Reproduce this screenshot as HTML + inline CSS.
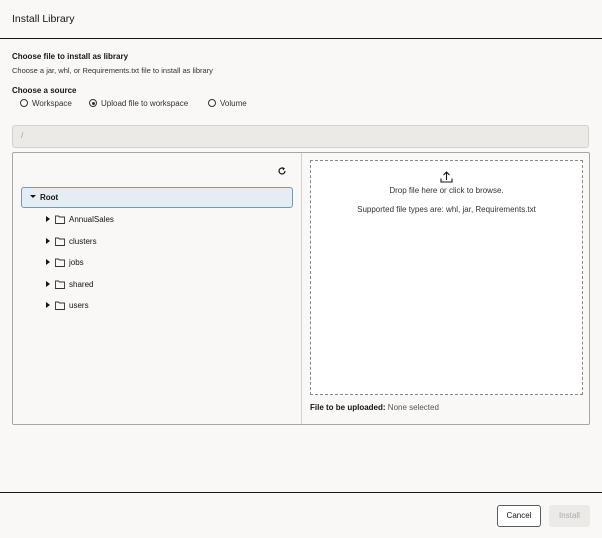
<!DOCTYPE html>
<html><head><style>
*{box-sizing:border-box;margin:0;padding:0}
body{width:602px;height:538px;background:#f9f8f6;font-family:"Liberation Sans",sans-serif;color:#161513;position:relative;overflow:hidden;font-size:8px}
.a{position:absolute;white-space:nowrap}
.radio{display:inline-block;width:8px;height:8px;border:1px solid #333;border-radius:50%;vertical-align:-1px;margin-right:4px;position:relative}
.radio.on::after{content:"";position:absolute;left:1.5px;top:1.5px;width:3px;height:3px;background:#333;border-radius:50%}
.row{position:absolute;left:46px;height:12px;font-size:8px;display:flex;align-items:center}
.tri{width:0;height:0;border-left:4px solid #161513;border-top:3px solid transparent;border-bottom:3px solid transparent;margin-right:5px}
.fold{width:10px;height:9px;margin-right:4px}
</style></head><body>
<div class="a" style="left:12px;top:13px;font-size:10.5px;color:#161513">Install Library</div>
<div class="a" style="left:0;top:38px;width:602px;height:1px;background:#161513"></div>
<div class="a" style="left:12px;top:52px;font-size:8px;font-weight:bold">Choose file to install as library</div>
<div class="a" style="left:12px;top:66px;font-size:7.5px;color:#333">Choose a jar, whl, or Requirements.txt file to install as library</div>
<div class="a" style="left:12px;top:86px;font-size:8px;font-weight:bold">Choose a source</div>
<div class="a" style="left:20px;top:99px;font-size:8px;color:#333"><span class="radio"></span>Workspace</div>
<div class="a" style="left:89px;top:99px;font-size:8px;color:#333"><span class="radio on"></span>Upload file to workspace</div>
<div class="a" style="left:208px;top:99px;font-size:8px;color:#333"><span class="radio"></span>Volume</div>
<div class="a" style="left:12px;top:125px;width:577px;height:23px;background:#eceae7;border:1px solid #d4d1cc;border-radius:3px"></div>
<div class="a" style="left:21px;top:131px;font-size:8px;color:#999">/</div>
<div class="a" style="left:12px;top:152px;width:578px;height:273px;border:1px solid #a9a6a2;border-radius:2px"></div>
<div class="a" style="left:301px;top:153px;width:1px;height:271px;background:#d4d1cc"></div>
<svg class="a" style="left:277px;top:166px" width="10" height="10" viewBox="0 0 10 10"><path d="M8 5A3 3 0 1 1 6.5 2.4" fill="none" stroke="#161513" stroke-width="1.2"/><path d="M5.5 1L8 2.5 6 4.5z" fill="#161513"/></svg>
<div class="a" style="left:21px;top:187px;width:272px;height:21px;background:#e4edf3;border:1px solid #6f9ab8;border-radius:3px"></div>
<div class="a" style="left:30px;top:195px;width:0;height:0;border-top:3px solid #161513;border-left:3px solid transparent;border-right:3px solid transparent"></div>
<div class="a" style="left:40px;top:193px;font-size:8px;font-weight:bold">Root</div>
<div class="row" style="top:213px"><span class="tri"></span><svg class="fold" viewBox="0 0 10 9"><path d="M.5 1h3l1 1h5v6.5H.5z" fill="none" stroke="#333" stroke-width="0.9"/></svg>AnnualSales</div>
<div class="row" style="top:235px"><span class="tri"></span><svg class="fold" viewBox="0 0 10 9"><path d="M.5 1h3l1 1h5v6.5H.5z" fill="none" stroke="#333" stroke-width="0.9"/></svg>clusters</div>
<div class="row" style="top:256px"><span class="tri"></span><svg class="fold" viewBox="0 0 10 9"><path d="M.5 1h3l1 1h5v6.5H.5z" fill="none" stroke="#333" stroke-width="0.9"/></svg>jobs</div>
<div class="row" style="top:278px"><span class="tri"></span><svg class="fold" viewBox="0 0 10 9"><path d="M.5 1h3l1 1h5v6.5H.5z" fill="none" stroke="#333" stroke-width="0.9"/></svg>shared</div>
<div class="row" style="top:299px"><span class="tri"></span><svg class="fold" viewBox="0 0 10 9"><path d="M.5 1h3l1 1h5v6.5H.5z" fill="none" stroke="#333" stroke-width="0.9"/></svg>users</div>
<div class="a" style="left:310px;top:160px;width:273px;height:235px;background:#fff;border:1px dashed #8a8784"></div>
<svg class="a" style="left:440px;top:170px" width="13" height="13" viewBox="0 0 13 13"><path d="M6.5 10V2M3.5 5l3-3 3 3M1 8.5v3.5h11V8.5" fill="none" stroke="#161513" stroke-width="1.1"/></svg>
<div class="a" style="left:310px;width:273px;top:186px;text-align:center;font-size:8px;color:#333">Drop file here or click to browse.</div>
<div class="a" style="left:310px;width:273px;top:205px;text-align:center;font-size:8px;color:#333">Supported file types are: whl, jar, Requirements.txt</div>
<div class="a" style="left:310px;top:403px;font-size:8px;color:#555"><b style="color:#161513">File to be uploaded:</b> None selected</div>
<div class="a" style="left:0;top:492px;width:602px;height:1px;background:#161513"></div>
<div class="a" style="left:497px;top:505px;width:44px;height:22px;border:1px solid #5c5a57;border-radius:3px;background:#fff;font-size:8px;text-align:center;line-height:20px">Cancel</div>
<div class="a" style="left:549px;top:505px;width:41px;height:22px;border-radius:3px;background:#eceae7;font-size:8px;color:#aaa;text-align:center;line-height:22px">Install</div>
</body></html>
